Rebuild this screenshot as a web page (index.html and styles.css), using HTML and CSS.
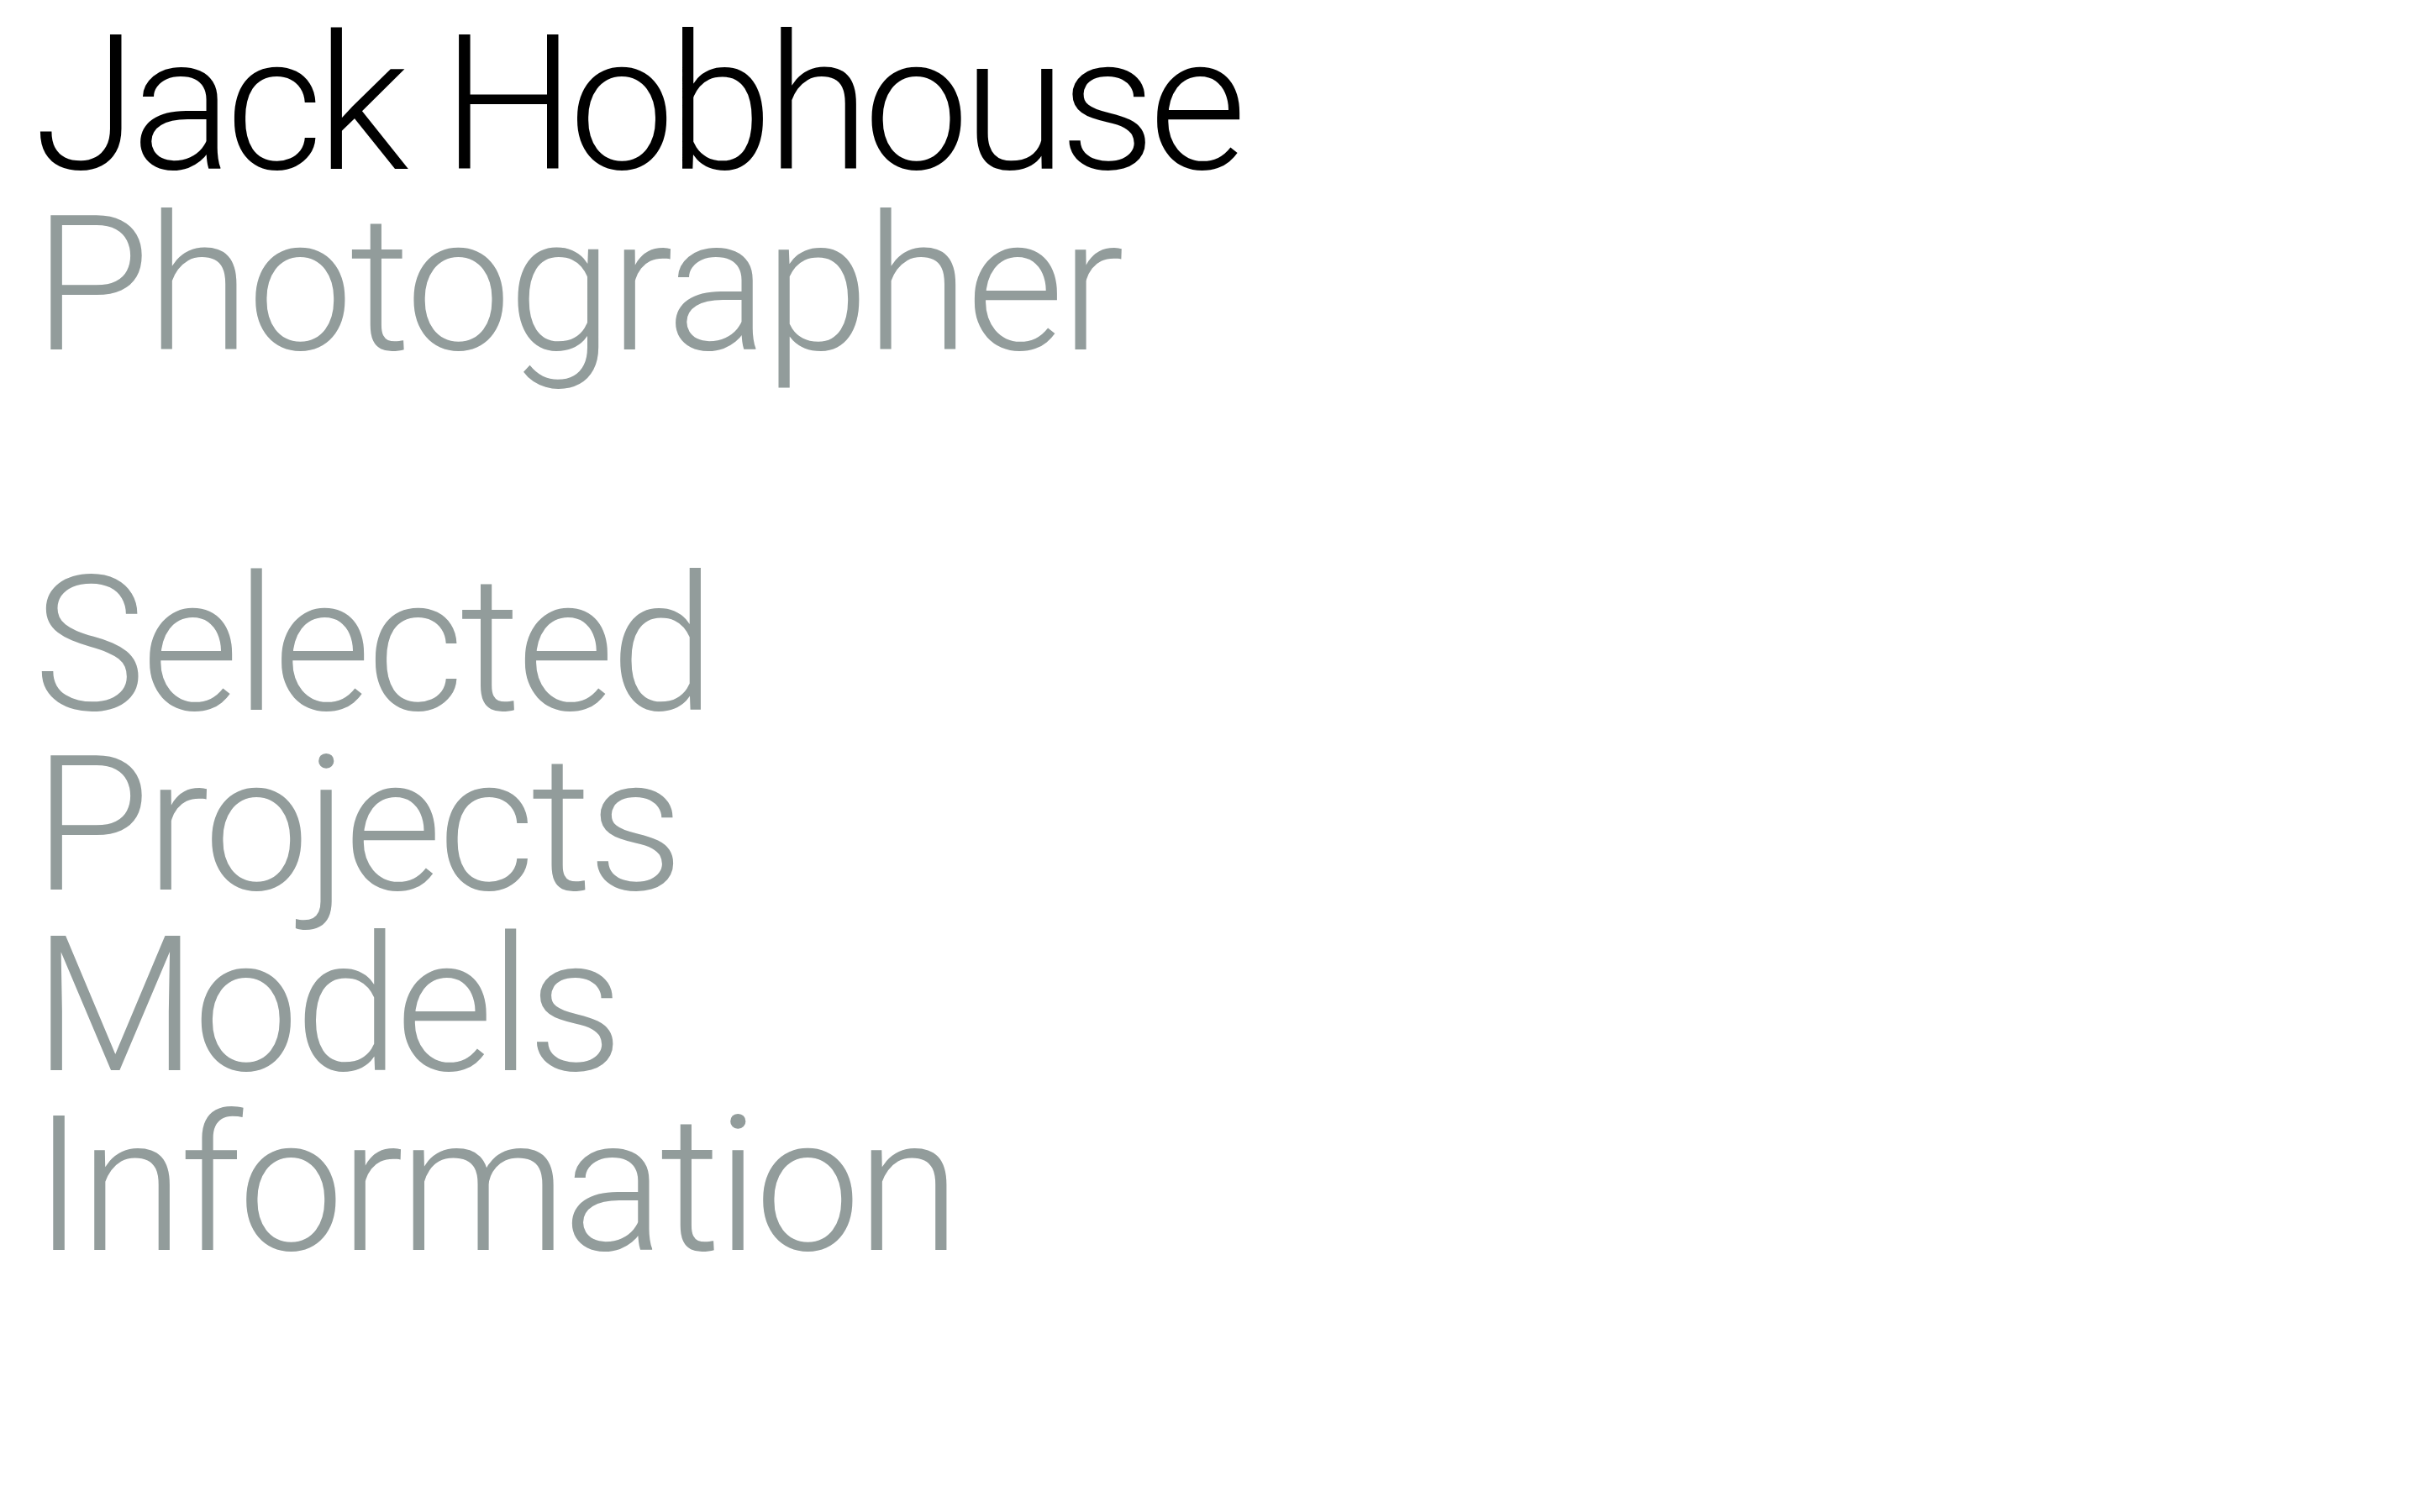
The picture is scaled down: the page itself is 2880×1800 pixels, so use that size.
FILE: index.html
```html
<!DOCTYPE html>
<html lang="en">
<head>
    <meta charset="UTF-8">
    <meta name="viewport" content="width=device-width, initial-scale=1.0">
    <title>Jack Hobhouse Photographer</title>
    <link rel="stylesheet" href="styles.css">
</head>
<body>

<div id="site">
    <header class="masthead">
        <a class="name" href="#">Jack Hobhouse</a>
        <span class="role">Photographer</span>
    </header>

    <!-- main menu -->
    <nav class="menu">
        <a href="#">Selected</a>
        <a href="#">Projects</a>
        <a href="#">Models</a>
        <a href="#">Information</a>
    </nav>
</div>

</body>
</html>
```

FILE: styles.css
```css
body {
    margin: 0;
    background-color: #fff;
    font-family: Roboto, "Liberation Sans", Arial, sans-serif;
}
#site {
    padding: 17px 0 0 40px;
    font-size: 225px;
    font-weight: 300;
    line-height: 214.5px;
    letter-spacing: -5px;
}
.masthead {
    display: flex;
    flex-direction: column;
    align-items: flex-start;
}
.name {
    color: #000;
    text-decoration: none;
    letter-spacing: -8px;
}
.role {
    color: #929c9b;
    letter-spacing: -4px;
}
/* one empty line between the header and the menu */
.menu {
    display: flex;
    flex-direction: column;
    align-items: flex-start;
    margin-top: 214.5px;
}
.menu a {
    color: #929c9b;
    text-decoration: none;
}
```
